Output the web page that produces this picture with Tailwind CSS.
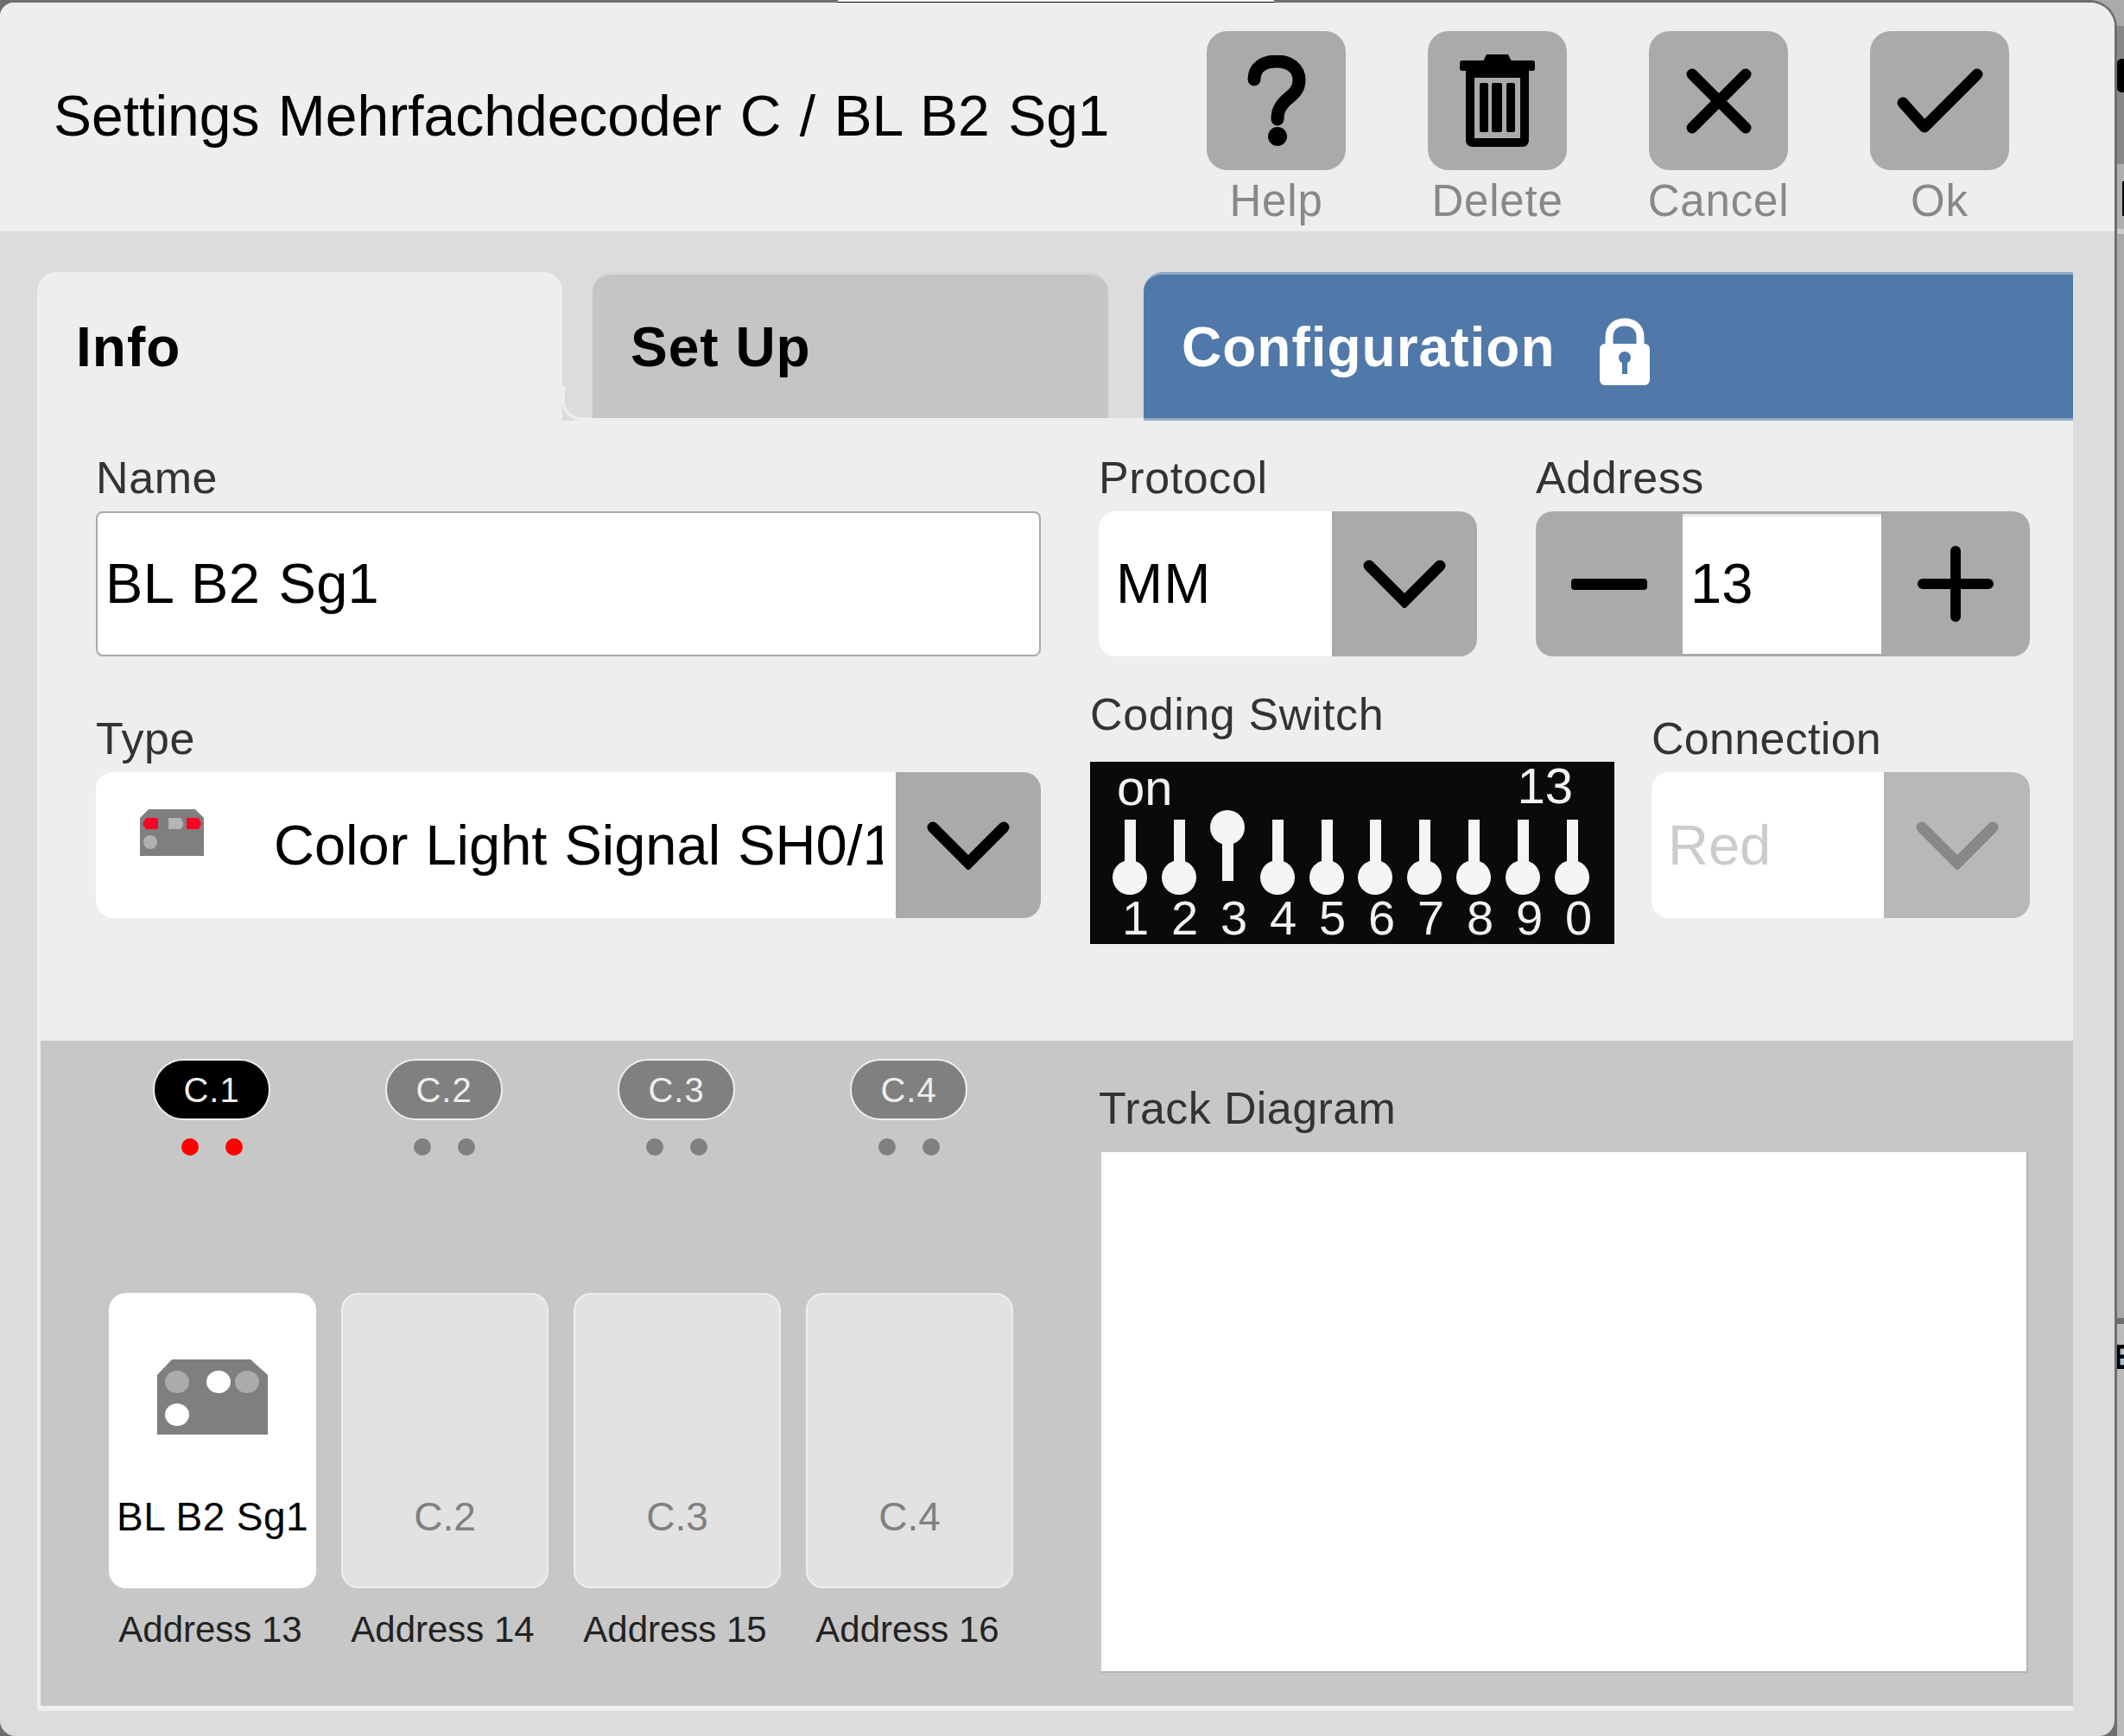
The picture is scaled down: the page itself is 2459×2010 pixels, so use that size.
<!DOCTYPE html>
<html lang="en">
<head>
  <meta charset="UTF-8">
  <title>Settings Mehrfachdecoder</title>
  <script src="https://cdn.jsdelivr.net/npm/@tailwindcss/browser@4"></script>
</head>
<body class="bg-[#aaaaaa] font-['Liberation_Sans',Arial,sans-serif] text-black">
  <div class="relative w-[2459px] h-[2010px] overflow-hidden">
    <!-- window behind the dialog, only slivers of it show -->
    <div class="absolute left-[2451px] top-[30px] w-[8px] h-[160px] bg-[#888888]"></div>
    <div class="absolute left-[2450px] top-[68px] w-[14px] h-[39px] rounded-full bg-black"></div>
    <div class="absolute left-[2451px] top-[190px] w-[8px] h-[75px] bg-[#b0b0b0]"></div>
    <div class="absolute left-[2457px] top-[210px] w-[2px] h-[40px] bg-black"></div>
    <div class="absolute left-[2451px] top-[265px] w-[8px] h-[6px] bg-[#cccccc]"></div>
    <div class="absolute left-[2451px] top-[1526px] w-[8px] h-[7px] bg-[#6e6e6e]"></div>
    <div class="absolute left-[2451px] top-[1533px] w-[8px] h-[477px] bg-[#bbbbbb]"></div>
    <span class="absolute left-[2446px] top-[1548px] text-[40px] leading-[46px] font-bold">E</span>

    <!-- dialog outline -->
    <div class="absolute left-0 top-0 w-[2451px] h-[2010px] bg-[#6e6e6e] rounded-tr-[32px]"></div>
    <div class="absolute left-[970px] top-0 w-[505px] h-[3px] bg-white border-b border-black z-10"></div>

    <!-- dialog -->
    <div class="absolute left-0 top-[3px] w-[2448px] h-[2007px] bg-[#dcdcdc] rounded-tl-[16px] rounded-tr-[28px] rounded-b-[18px] overflow-hidden">
      <!-- header -->
      <div class="flex items-start h-[265px] bg-[#eeeeee]">
        <h1 class="w-[1397px] pl-[62px] pt-[93px] text-[66px] leading-[76px] font-normal whitespace-nowrap [word-spacing:3px]">Settings Mehrfachdecoder C / BL B2 Sg1</h1>
        <div class="flex gap-[95px] pt-[33px]">
          <div class="w-[161px] flex flex-col items-center">
            <div class="w-[161px] h-[161px] rounded-[24px] bg-[#aaaaaa] flex items-center justify-center">
              <svg width="70" height="106" viewBox="0 0 70 106"><path d="M9 28C9 14 20 7 35 7C50 7 61 15 61 29C61 43 50 47 43 55C39 60 36 64 36 74" fill="none" stroke="#000" stroke-width="15" stroke-linecap="round"/><circle cx="36" cy="94" r="11" fill="#000"/></svg>
            </div>
            <span class="mt-[6px] text-[51px] leading-[60px] tracking-[0.8px] text-[#888888]">Help</span>
          </div>
          <div class="w-[161px] flex flex-col items-center">
            <div class="w-[161px] h-[161px] rounded-[24px] bg-[#aaaaaa] flex items-center justify-center">
              <svg width="87" height="107" viewBox="0 0 87 107"><path d="M27 8L31 0H56L60 8Z" fill="#000"/><rect y="7" width="87" height="12" rx="3" fill="#000"/><path d="M7 17H80V99C80 104 77 107 72 107H15C10 107 7 104 7 99ZM17 27V97H70V27Z" fill="#000" fill-rule="evenodd"/><rect x="23" y="33" width="10" height="57" rx="2" fill="#000"/><rect x="37" y="33" width="12" height="57" rx="2" fill="#000"/><rect x="54" y="33" width="10" height="57" rx="2" fill="#000"/></svg>
            </div>
            <span class="mt-[6px] text-[51px] leading-[60px] tracking-[0.8px] text-[#888888]">Delete</span>
          </div>
          <div class="w-[161px] flex flex-col items-center">
            <div class="w-[161px] h-[161px] rounded-[24px] bg-[#aaaaaa] flex items-center justify-center">
              <svg width="76" height="76" viewBox="0 0 76 76"><path d="M7 7L69 69M69 7L7 69" stroke="#000" stroke-width="13" stroke-linecap="round"/></svg>
            </div>
            <span class="mt-[6px] text-[51px] leading-[60px] tracking-[0.8px] text-[#888888]">Cancel</span>
          </div>
          <div class="w-[161px] flex flex-col items-center">
            <div class="w-[161px] h-[161px] rounded-[24px] bg-[#aaaaaa] flex items-center justify-center">
              <svg width="100" height="76" viewBox="0 0 100 76"><path d="M7 40L32 68L93 7" fill="none" stroke="#000" stroke-width="13" stroke-linecap="round" stroke-linejoin="round"/></svg>
            </div>
            <span class="mt-[6px] text-[51px] leading-[60px] tracking-[0.8px] text-[#888888]">Ok</span>
          </div>
        </div>
      </div>

      <!-- tabs -->
      <div class="flex items-end h-[219px] pl-[43px] w-[2400px]">
        <div class="w-[608px] h-[172px] bg-[#eeeeee] rounded-t-[22px] flex items-center pl-[45px] pt-[2px] text-[64px] tracking-[1px] font-bold">Info</div>
        <div class="w-[35px] h-[40px] border-l-[3px] border-b-[4px] border-[#eeeeee] rounded-bl-[22px]"></div>
        <div class="w-[597px] h-[172px] bg-[#c5c5c5] border-t-[3px] border-t-[#d6d6d6] border-b-[3px] border-b-[#eeeeee] rounded-t-[22px] flex items-center pl-[44px] pt-[2px] text-[64px] tracking-[1px] font-bold">Set Up</div>
        <div class="w-[41px] h-[3px] bg-[#eeeeee]"></div>
        <div class="flex-1 h-[172px] bg-[#5078a8] border-y-[3px] border-[#8fa9c6] rounded-tl-[22px] flex items-center pl-[44px] pt-[2px] gap-[52px] text-[64px] tracking-[1px] font-bold text-white">
          Configuration
          <svg class="mt-[10px]" width="58" height="78" viewBox="0 0 58 78"><path d="M11 36V22C11 11 19 5 29 5C39 5 47 11 47 22V36" fill="none" stroke="#fff" stroke-width="9"/><rect y="30" width="58" height="48" rx="6" fill="#fff"/><circle cx="29" cy="46" r="7" fill="#5078a8"/><rect x="26" y="48" width="6" height="17" fill="#5078a8"/></svg>
        </div>
      </div>

      <!-- form -->
      <div class="w-[2357px] ml-[43px] h-[718px] bg-[#eeeeee] pl-[68px] pt-[36px]">
        <div class="flex h-[307px]">
          <div class="w-[1094px] mr-[67px]">
            <div class="text-[52px] leading-[60px] tracking-[0.6px] text-[#333333] h-[69px]">Name</div>
            <div class="h-[168px] bg-white border-2 border-[#aaaaaa] rounded-[8px] flex items-center pl-[9px] text-[65px] tracking-[0.3px] [word-spacing:3px]">BL B2 Sg1</div>
          </div>
          <div class="w-[438px] mr-[68px]">
            <div class="text-[52px] leading-[60px] tracking-[0.6px] text-[#333333] h-[69px]">Protocol</div>
            <div class="h-[168px] bg-white rounded-[20px] overflow-hidden flex">
              <div class="flex-1 flex items-center pl-[20px] text-[65px] tracking-[1px]">MM</div>
              <div class="w-[168px] bg-[#aaaaaa] flex items-center justify-center">
                <svg width="96" height="56" viewBox="0 0 96 56"><path d="M7 7L48 48L89 7" fill="none" stroke="#000" stroke-width="13" stroke-linecap="round"/></svg>
              </div>
            </div>
          </div>
          <div class="w-[572px]">
            <div class="text-[52px] leading-[60px] tracking-[0.6px] text-[#333333] h-[69px]">Address</div>
            <div class="h-[168px] bg-white rounded-[20px] overflow-hidden flex">
              <div class="w-[170px] bg-[#aaaaaa] flex items-center justify-center">
                <svg width="88" height="13" viewBox="0 0 88 13"><rect width="88" height="13" rx="4" fill="#000"/></svg>
              </div>
              <div class="flex-1 flex items-center pl-[9px] text-[65px] border-y-[3px] border-[#aaaaaa] shadow-[inset_0_3px_0_#e8e8e8]">13</div>
              <div class="w-[172px] bg-[#aaaaaa] flex items-center justify-center">
                <svg width="88" height="88" viewBox="0 0 88 88"><path d="M44 6V82M6 44H82" stroke="#000" stroke-width="12" stroke-linecap="round"/></svg>
              </div>
            </div>
          </div>
        </div>

        <div class="flex">
          <div class="w-[1094px] mr-[57px]">
            <div class="text-[52px] leading-[60px] tracking-[0.6px] text-[#333333] h-[69px] mt-[-5px]">Type</div>
            <div class="h-[169px] bg-white rounded-[20px] overflow-hidden flex">
              <div class="w-[206px] pl-[51px] pt-[43px] shrink-0">
                <svg width="74" height="54" viewBox="0 0 74 54"><path d="M10 0H64L74 10V54H0V10Z" fill="#7f7f7f"/><path d="M7 10H21V23H7L3 17Z" fill="#ff0022"/><path d="M33 10H47L50 15V18L47 23H33Z" fill="#b5b5b5"/><path d="M54 10H68L71 17L68 23H54Z" fill="#ff0022"/><circle cx="12" cy="38" r="8" fill="#b0b0b0"/></svg>
              </div>
              <div class="w-[705px] overflow-hidden whitespace-nowrap flex items-center text-[65px] [word-spacing:2px]">Color Light Signal SH0/1</div>
              <div class="ml-auto w-[168px] bg-[#aaaaaa] flex items-center justify-center">
                <svg width="96" height="56" viewBox="0 0 96 56"><path d="M7 7L48 48L89 7" fill="none" stroke="#000" stroke-width="13" stroke-linecap="round"/></svg>
              </div>
            </div>
          </div>
          <div class="w-[607px] mr-[43px] mt-[-33px]">
            <div class="text-[52px] leading-[60px] tracking-[0.6px] text-[#333333] h-[60px]">Coding Switch</div>
            <div class="relative w-[607px] h-[211px] mt-[25px] bg-[#0a0a0a] text-[#f2f2f2]">
              <span class="absolute left-[31px] top-[0px] text-[58px] leading-[60px]">on</span>
              <span class="absolute right-[48px] top-[-2px] text-[58px] leading-[60px]">13</span>
              <svg class="absolute left-0 top-0" width="607" height="211" viewBox="0 0 607 211" fill="#f5f5f5">
                <rect x="40" y="67" width="13" height="68"/><circle cx="46" cy="134" r="20"/>
                <rect x="97" y="67" width="13" height="68"/><circle cx="103" cy="134" r="20"/>
                <rect x="153" y="76" width="13" height="62"/><circle cx="159" cy="76" r="20"/>
                <rect x="211" y="67" width="13" height="68"/><circle cx="217" cy="134" r="20"/>
                <rect x="268" y="67" width="13" height="68"/><circle cx="274" cy="134" r="20"/>
                <rect x="324" y="67" width="13" height="68"/><circle cx="330" cy="134" r="20"/>
                <rect x="381" y="67" width="13" height="68"/><circle cx="387" cy="134" r="20"/>
                <rect x="438" y="67" width="13" height="68"/><circle cx="444" cy="134" r="20"/>
                <rect x="495" y="67" width="13" height="68"/><circle cx="501" cy="134" r="20"/>
                <rect x="552" y="67" width="13" height="68"/><circle cx="558" cy="134" r="20"/>
              </svg>
              <div class="absolute left-[24px] top-[151px] flex text-[56px] leading-[60px]">
                <span class="w-[57px] text-center">1</span><span class="w-[57px] text-center">2</span><span class="w-[57px] text-center">3</span><span class="w-[57px] text-center">4</span><span class="w-[57px] text-center">5</span><span class="w-[57px] text-center">6</span><span class="w-[57px] text-center">7</span><span class="w-[57px] text-center">8</span><span class="w-[57px] text-center">9</span><span class="w-[57px] text-center">0</span>
              </div>
            </div>
          </div>
          <div class="w-[438px]">
            <div class="text-[52px] leading-[60px] tracking-[0.3px] text-[#333333] h-[69px] mt-[-5px]">Connection</div>
            <div class="h-[169px] bg-white rounded-[20px] overflow-hidden flex">
              <div class="flex-1 flex items-center pl-[19px] text-[65px] text-[#cccccc]">Red</div>
              <div class="w-[169px] bg-[#b8b8b8] flex items-center justify-center">
                <svg width="96" height="56" viewBox="0 0 96 56"><path d="M7 7L48 48L89 7" fill="none" stroke="#888888" stroke-width="13" stroke-linecap="round"/></svg>
              </div>
            </div>
          </div>
        </div>
      </div>

      <!-- bottom panel -->
      <div class="w-[2357px] ml-[43px] h-[776px] bg-[#c7c7c7] flex border-l-[4px] border-b-[6px] border-[#eeeeee]">
        <div class="w-[1228px] relative">
          <div class="absolute left-[130px] top-[21px] flex gap-[133px]">
            <div class="w-[136px] flex flex-col items-center"><div class="w-[136px] h-[71px] rounded-full bg-black border-2 border-[#eeeeee] text-[#eeeeee] text-[40px] tracking-[1px] flex items-center justify-center">C.1</div><div class="flex gap-[31px] mt-[21px]"><i class="w-[20px] h-[20px] rounded-full bg-[#ff0000]"></i><i class="w-[20px] h-[20px] rounded-full bg-[#ff0000]"></i></div></div>
            <div class="w-[136px] flex flex-col items-center"><div class="w-[136px] h-[71px] rounded-full bg-[#808080] border-2 border-[#eeeeee] text-[#eeeeee] text-[40px] tracking-[1px] flex items-center justify-center">C.2</div><div class="flex gap-[31px] mt-[21px]"><i class="w-[20px] h-[20px] rounded-full bg-[#808080]"></i><i class="w-[20px] h-[20px] rounded-full bg-[#808080]"></i></div></div>
            <div class="w-[136px] flex flex-col items-center"><div class="w-[136px] h-[71px] rounded-full bg-[#808080] border-2 border-[#eeeeee] text-[#eeeeee] text-[40px] tracking-[1px] flex items-center justify-center">C.3</div><div class="flex gap-[31px] mt-[21px]"><i class="w-[20px] h-[20px] rounded-full bg-[#808080]"></i><i class="w-[20px] h-[20px] rounded-full bg-[#808080]"></i></div></div>
            <div class="w-[136px] flex flex-col items-center"><div class="w-[136px] h-[71px] rounded-full bg-[#808080] border-2 border-[#eeeeee] text-[#eeeeee] text-[40px] tracking-[1px] flex items-center justify-center">C.4</div><div class="flex gap-[31px] mt-[21px]"><i class="w-[20px] h-[20px] rounded-full bg-[#808080]"></i><i class="w-[20px] h-[20px] rounded-full bg-[#808080]"></i></div></div>
          </div>
          <div class="absolute left-[79px] top-[292px] flex gap-[29px]">
            <div class="w-[240px] flex flex-col items-center">
              <div class="relative w-[240px] h-[342px] rounded-[20px] bg-white">
                <svg class="absolute left-[56px] top-[77px]" width="128" height="87" viewBox="0 0 128 87"><path d="M17 0H108L128 18V87H0V18Z" fill="#7f7f7f"/><ellipse cx="23" cy="26" rx="14" ry="13" fill="#ababab"/><ellipse cx="71" cy="26" rx="14" ry="13" fill="#fff"/><ellipse cx="104" cy="26" rx="14" ry="13" fill="#ababab"/><ellipse cx="23" cy="64" rx="14" ry="13" fill="#fff"/></svg>
                <div class="absolute inset-x-0 top-[232px] text-center text-[46px] tracking-[0.4px] leading-[54px] whitespace-nowrap">BL B2 Sg1</div>
              </div>
              <div class="mt-[23px] pr-[5px] text-[42px] leading-[50px] text-[#222222]">Address 13</div>
            </div>
            <div class="w-[240px] flex flex-col items-center">
              <div class="relative w-[240px] h-[342px] rounded-[20px] bg-[#e2e2e2] border-2 border-[#eeeeee]">
                <div class="absolute inset-x-0 top-[230px] text-center text-[46px] leading-[54px] text-[#808080]">C.2</div>
              </div>
              <div class="mt-[23px] pr-[5px] text-[42px] leading-[50px] text-[#222222]">Address 14</div>
            </div>
            <div class="w-[240px] flex flex-col items-center">
              <div class="relative w-[240px] h-[342px] rounded-[20px] bg-[#e2e2e2] border-2 border-[#eeeeee]">
                <div class="absolute inset-x-0 top-[230px] text-center text-[46px] leading-[54px] text-[#808080]">C.3</div>
              </div>
              <div class="mt-[23px] pr-[5px] text-[42px] leading-[50px] text-[#222222]">Address 15</div>
            </div>
            <div class="w-[240px] flex flex-col items-center">
              <div class="relative w-[240px] h-[342px] rounded-[20px] bg-[#e2e2e2] border-2 border-[#eeeeee]">
                <div class="absolute inset-x-0 top-[230px] text-center text-[46px] leading-[54px] text-[#808080]">C.4</div>
              </div>
              <div class="mt-[23px] pr-[5px] text-[42px] leading-[50px] text-[#222222]">Address 16</div>
            </div>
          </div>
        </div>
        <div class="w-[1073px] pt-[48px]">
          <div class="ml-[-3px] text-[52px] leading-[60px] tracking-[0.4px] text-[#333333] h-[81px]">Track Diagram</div>
          <div class="h-[603px] bg-white border-r-2 border-b-2 border-[#b5b5b5]"></div>
        </div>
      </div>
    </div>
  </div>
</body>
</html>
